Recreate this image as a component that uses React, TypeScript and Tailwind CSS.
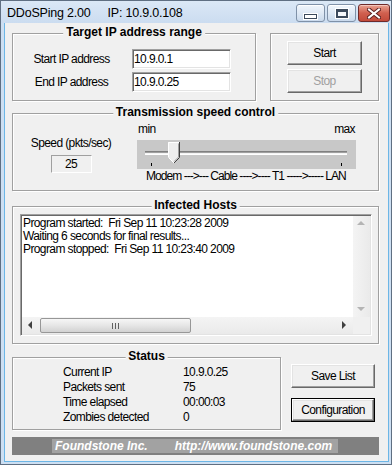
import React from "react";

type Kids = { children?: React.ReactNode };

const raised =
  "border border-t-white border-l-white border-r-[#696969] border-b-[#696969] shadow-[inset_-1px_-1px_0_#a0a0a0,inset_1px_1px_0_#e3e3e3]";
const sunken =
  "border border-t-[#a0a0a0] border-l-[#a0a0a0] border-r-white border-b-white shadow-[inset_1px_1px_0_#696969,inset_-1px_-1px_0_#e3e3e3]";

function Group({ title, className = "", children }: Kids & { title: string; className?: string }) {
  return (
    <div className={`relative border border-[#a0a0a0] shadow-[1px_1px_0_#fff,inset_1px_1px_0_#fff] ${className}`}>
      <span className="absolute left-1/2 top-[-9px] -translate-x-1/2 whitespace-nowrap bg-[#f0f0f0] px-[3px] text-[12px] font-bold leading-[15px] tracking-normal">
        {title}
      </span>
      {children}
    </div>
  );
}

function Button({
  label,
  disabled,
  isDefault,
  className = "",
}: {
  label: string;
  disabled?: boolean;
  isDefault?: boolean;
  className?: string;
}) {
  const face = (
    <span
      className={`flex h-full w-full items-center justify-center bg-[#f0f0f0] ${raised} ${
        disabled ? "text-[#a0a0a0]" : "text-black"
      }`}
    >
      {label}
    </span>
  );
  return (
    <button className={`block h-[24px] ${isDefault ? "border border-black" : ""} ${className}`}>
      {face}
    </button>
  );
}

function Arrow({ dir, color }: { dir: "up" | "down" | "left" | "right"; color: string }) {
  const pts = {
    up: "4,9 8,5 12,9",
    down: "4,7 8,11 12,7",
    left: "10,4 6,8 10,12",
    right: "6,4 10,8 6,12",
  }[dir];
  return (
    <svg width="17" height="17" viewBox="0 0 17 17" className="block shrink-0">
      <polygon points={pts} fill={color} />
    </svg>
  );
}

function TitleButton({ kind }: { kind: "min" | "max" | "close" }) {
  if (kind === "close") {
    return (
      <div className="flex h-[18px] w-[32px] items-center justify-center rounded-[3px] border border-[#6e2a2a] bg-gradient-to-b from-[#e8a393] via-[#d0604f] to-[#c24a3a] shadow-[inset_0_1px_0_#f3c7bd]">
        <svg width="14" height="11" viewBox="0 0 14 11">
          <path
            d="M2 1.5 L12 9.5 M12 1.5 L2 9.5"
            stroke="#5a2020"
            strokeWidth="4"
            strokeLinecap="square"
          />
          <path d="M2 1.5 L12 9.5 M12 1.5 L2 9.5" stroke="#fff" strokeWidth="2" strokeLinecap="square" />
        </svg>
      </div>
    );
  }
  return (
    <div className="flex h-[18px] w-[29px] items-center justify-center rounded-[3px] border border-[#7f91a8] bg-gradient-to-b from-[#f1f6fc] via-[#dfe9f5] to-[#c9d9ec] shadow-[inset_0_1px_0_#fff]">
      {kind === "min" ? (
        <div className="mt-[6px] h-[5px] w-[13px] border border-[#3c4a5c] bg-white shadow-[0_0_0_1px_#fff]" />
      ) : (
        <div className="h-[9px] w-[12px] border-2 border-t-[3px] border-[#3c4a5c] bg-[#f5f8fc] shadow-[0_0_0_1px_#fff]" />
      )}
    </div>
  );
}

function Slider() {
  return (
    <svg width="219" height="29" viewBox="0 0 219 29" className="block">
      <rect width="219" height="29" fill="#c8c8c8" />
      <rect x="8" y="11" width="202" height="1" fill="#808080" />
      <rect x="8" y="12" width="202" height="1" fill="#a0a0a0" />
      <rect x="8" y="13" width="202" height="1" fill="#f4f4f4" />
      <rect x="8" y="14" width="202" height="1" fill="#ffffff" />
      <polygon points="31,2 43,2 43,17 37,23 31,17" fill="#eeeeee" />
      <polyline points="31.5,17 31.5,2.5 42.5,2.5" fill="none" stroke="#ffffff" />
      <polyline points="31.5,17.5 37,23" fill="none" stroke="#ffffff" />
      <polyline points="42.5,2 42.5,17.5 37,23" fill="none" stroke="#404040" />
      <polyline points="41.5,3.5 41.5,17 37,21.5" fill="none" stroke="#a0a0a0" />
      <rect x="14" y="23" width="1" height="3" fill="#000" />
      <rect x="204" y="23" width="1" height="3" fill="#000" />
    </svg>
  );
}

const statusRows = [
  ["Current IP", "10.9.0.25"],
  ["Packets sent", "75"],
  ["Time elapsed", "00:00:03"],
  ["Zombies detected", "0"],
];

const logLines = [
  "Program started:  Fri Sep 11 10:23:28 2009",
  "Waiting 6 seconds for final results...",
  "Program stopped:  Fri Sep 11 10:23:40 2009",
];

export default function App() {
  return (
    <div className="flex h-[465px] w-[392px] flex-col overflow-hidden border border-[#5f6f82] bg-[#cddff2] font-['Liberation_Sans',Arial,sans-serif] text-[12px] tracking-[-0.6px] text-black">
      {/* Title bar */}
      <div className="flex h-[22px] shrink-0 items-start justify-between bg-gradient-to-b from-[#dbe8f6] to-[#cbdcf0] pr-[1px] pt-[3px]">
        <div className="flex pl-[6px] pt-[1px] text-[12.5px] leading-[16px] tracking-[-0.2px] text-black">
          <span>DDoSPing 2.00</span>
          <span className="ml-[17px]">IP: 10.9.0.108</span>
        </div>
        <div className="flex gap-[2px]">
          <TitleButton kind="min" />
          <TitleButton kind="max" />
          <TitleButton kind="close" />
        </div>
      </div>

      {/* Client area */}
      <div className="flex flex-1 flex-col px-[2px] pb-[2px] pl-[3px]">
        <div className="flex flex-1 flex-col border border-t-0 border-[#6cb6e6] bg-[#f0f0f0] pb-[6px] pl-[7px] pr-[9px] pt-[10px]">
          {/* Row 1 */}
          <div className="flex h-[68px] shrink-0 gap-[14px]">
            <Group title="Target IP address range" className="w-[244px]">
              <div className="flex flex-col gap-[3px] pl-[8px] pt-[15px]">
                {[
                  ["Start IP address", "10.9.0.1"],
                  ["End IP address", "10.9.0.25"],
                ].map(([label, value]) => (
                  <div key={label} className="flex items-center">
                    <span className="w-[101px] text-center">{label}</span>
                    <div className={`ml-[10px] flex h-[20px] w-[99px] items-center bg-white pl-[1px] ${sunken}`}>
                      {value}
                    </div>
                  </div>
                ))}
              </div>
            </Group>
            <Group title="" className="w-[109px]">
              <div className="flex flex-col items-center gap-[4px] pt-[7px]">
                <Button label="Start" className="w-[75px]" />
                <Button label="Stop" disabled className="w-[75px]" />
              </div>
            </Group>
          </div>

          {/* Row 2 */}
          <Group title="Transmission speed control" className="mt-[12px] h-[78px] shrink-0">
            <div className="flex">
              <div className="flex w-[116px] flex-col items-center pt-[22px]">
                <span className="leading-[14px]">Speed (pkts/sec)</span>
                <div className="mt-[5px] flex h-[18px] w-[41px] items-center justify-center border border-t-[#a0a0a0] border-l-[#a0a0a0] border-b-white border-r-white">
                  25
                </div>
              </div>
              <div className="ml-[8px] flex w-[219px] flex-col pt-[8px]">
                <div className="flex justify-between px-[1px] leading-[14px]">
                  <span>min</span>
                  <span>max</span>
                </div>
                <div className="mt-[4px]">
                  <Slider />
                </div>
                <span className="whitespace-pre pl-[9px] leading-[14px] tracking-[-0.95px]">
                  Modem ---&gt;--- Cable ----&gt;---- T1 -----&gt;----- LAN
                </span>
              </div>
            </div>
          </Group>

          {/* Row 3 */}
          <Group title="Infected Hosts" className="mt-[15px] h-[138px] shrink-0">
            <div className={`ml-[7px] mt-[7px] flex h-[122px] w-[352px] flex-col bg-white p-[1px] ${sunken}`}>
              <div className="flex min-h-0 flex-1">
                <div className="flex-1 whitespace-pre pl-[1px] pt-[1px] leading-[13px]">
                  {logLines.map((l) => (
                    <div key={l}>{l}</div>
                  ))}
                </div>
                <div className="flex w-[17px] flex-col justify-between bg-gradient-to-r from-[#f4f4f4] to-[#eaeaea]">
                  <Arrow dir="up" color="#b4b4b4" />
                  <Arrow dir="down" color="#b4b4b4" />
                </div>
              </div>
              <div className="flex h-[17px] shrink-0">
                <div className="flex flex-1 items-center bg-gradient-to-b from-[#f4f4f4] to-[#eaeaea]">
                  <Arrow dir="left" color="#404040" />
                  <div className="ml-[1px] flex h-[15px] w-[151px] items-center justify-center rounded-[2px] border border-[#979797] bg-gradient-to-b from-[#f6f6f6] via-[#e6e6e6] to-[#d2d2d2]">
                    <div className="flex gap-[2px]">
                      <div className="h-[6px] w-[1px] bg-[#606060]" />
                      <div className="h-[6px] w-[1px] bg-[#606060]" />
                      <div className="h-[6px] w-[1px] bg-[#606060]" />
                    </div>
                  </div>
                  <div className="flex-1" />
                  <Arrow dir="right" color="#404040" />
                </div>
                <div className="w-[17px] bg-[#f0f0f0]" />
              </div>
            </div>
          </Group>

          {/* Row 4 */}
          <div className="mt-[13px] flex h-[73px] shrink-0">
            <Group title="Status" className="w-[269px]">
              <div className="grid grid-cols-[120px_auto] pl-[50px] pt-[7px] leading-[15px]">
                {statusRows.map(([k, v]) => (
                  <React.Fragment key={k}>
                    <span>{k}</span>
                    <span>{v}</span>
                  </React.Fragment>
                ))}
              </div>
            </Group>
            <div className="ml-[10px] flex flex-col gap-[10px] pt-[7px]">
              <Button label="Save List" className="w-[84px]" />
              <Button label="Configuration" isDefault className="w-[84px]" />
            </div>
          </div>

          {/* Footer */}
          <div className="mt-[7px] flex h-[18px] shrink-0 items-center bg-[#808080] pl-[40px]">
            <div className="flex h-[14px] w-[286px] items-center whitespace-pre bg-[#a2a2a2] pl-[3px] text-[12px] font-bold italic leading-[14px] tracking-normal text-white">
              <span>Foundstone Inc.</span>
              <span className="ml-[27px]">http://www.foundstone.com</span>
            </div>
          </div>
        </div>
      </div>
    </div>
  );
}
